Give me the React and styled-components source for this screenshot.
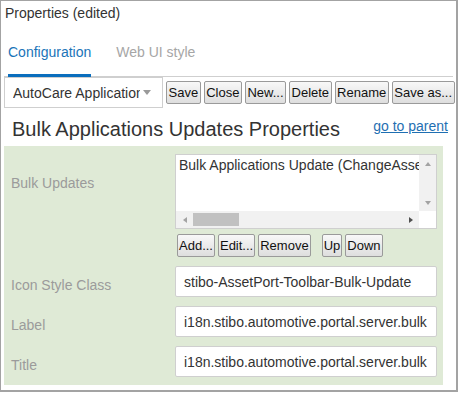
import React from "react";
import styled, { createGlobalStyle } from "styled-components";

const GlobalStyle = createGlobalStyle`
  body {
    margin: 0;
    background: #fff;
    font-family: "Liberation Sans", Arial, sans-serif;
  }
`;

function Arrow({ dir, dark }) {
  return <Tri $dir={dir} $dark={dark} />;
}

function App() {
  return (
    <>
      <GlobalStyle />
      <Frame>
        <WindowTitle>Properties (edited)</WindowTitle>
        <TabBar>
          <Tab $active>Configuration</Tab>
          <Tab>Web UI style</Tab>
        </TabBar>
        <Toolbar>
          <Select>
            <SelectText>AutoCare Applications Update</SelectText>
            <Caret />
          </Select>
          <ToolButton>Save</ToolButton>
          <ToolButton>Close</ToolButton>
          <ToolButton>New...</ToolButton>
          <ToolButton>Delete</ToolButton>
          <ToolButton>Rename</ToolButton>
          <ToolButton>Save as...</ToolButton>
        </Toolbar>
        <HeaderRow>
          <Heading>Bulk Applications Updates Properties</Heading>
          <ParentLink href="#">go to parent</ParentLink>
        </HeaderRow>
        <Panel>
          <Row>
            <Label $top={21}>Bulk Updates</Label>
            <div>
              <ListBox>
                <ListContent>Bulk Applications Update (ChangeAssetApplications)</ListContent>
                <VScroll>
                  <ArrowBox><Arrow dir="up" /></ArrowBox>
                  <ArrowBox><Arrow dir="down" /></ArrowBox>
                </VScroll>
                <HScroll>
                  <ArrowBox><Arrow dir="left" /></ArrowBox>
                  <Thumb />
                  <ArrowBox><Arrow dir="right" dark /></ArrowBox>
                </HScroll>
                <div />
              </ListBox>
              <ListButtons>
                <Button>Add...</Button>
                <Button>Edit...</Button>
                <Button>Remove</Button>
                <Button $gapBefore>Up</Button>
                <Button>Down</Button>
              </ListButtons>
            </div>
          </Row>
          <Row>
            <Label $top={11}>Icon Style Class</Label>
            <Field readOnly value="stibo-AssetPort-Toolbar-Bulk-Update" />
          </Row>
          <Row>
            <Label $top={11}>Label</Label>
            <Field readOnly value="i18n.stibo.automotive.portal.server.bulk" />
          </Row>
          <Row>
            <Label $top={11}>Title</Label>
            <Field readOnly value="i18n.stibo.automotive.portal.server.bulk" />
          </Row>
        </Panel>
      </Frame>
    </>
  );
}

export default App;

const Frame = styled.div`
  box-sizing: border-box;
  width: 458px;
  height: 392px;
  border: 1px solid #a3a3a3;
  border-right-width: 2px;
  border-bottom-width: 2px;
  padding: 0 3px;
  color: #333;
  font-size: 14px;
  line-height: 16px;
  overflow: hidden;
`;

const WindowTitle = styled.div`
  padding: 4px 0 0 1px;
`;

const TabBar = styled.div`
  display: flex;
  gap: 25px;
  padding: 23px 0 0 4px;
  border-bottom: 1px solid #cfcfcf;
`;

const Tab = styled.div`
  padding-bottom: 14px;
  margin-bottom: -1px;
  color: ${(p) => (p.$active ? "#1a74b8" : "#a6a6a6")};
  border-bottom: 3px solid ${(p) => (p.$active ? "#0a6ebd" : "transparent")};
`;

const Toolbar = styled.div`
  display: flex;
  align-items: center;
  gap: 3px;
`;

const Select = styled.div`
  box-sizing: border-box;
  flex: none;
  width: 159px;
  height: 31px;
  border: 1px solid #cfcfcf;
  display: flex;
  align-items: center;
  padding-left: 8px;
`;

const SelectText = styled.span`
  width: 127px;
  overflow: hidden;
  white-space: nowrap;
`;

const Caret = styled.span`
  margin-left: 3px;
  border-left: 4px solid transparent;
  border-right: 4px solid transparent;
  border-top: 5px solid #9a9a9a;
`;

const Button = styled.button`
  box-sizing: border-box;
  flex: none;
  height: 23px;
  padding: 0 1px;
  margin: 0 0 0 ${(p) => (p.$gapBefore ? "8px" : "0")};
  border: 1px solid #9a9a9a;
  border-radius: 2px;
  background: linear-gradient(#f8f8f8, #dedede);
  font: 13px "Liberation Sans", Arial, sans-serif;
  color: #111;
  white-space: nowrap;
`;

const ToolButton = styled(Button)`
  padding: 0 1.5px;
`;

const HeaderRow = styled.div`
  display: flex;
  justify-content: space-between;
  align-items: flex-start;
  padding: 9px 5px 0 8px;
  margin-bottom: 5px;
`;

const Heading = styled.div`
  font-size: 20px;
  line-height: 24px;
`;

const ParentLink = styled.a`
  margin-top: 1px;
  color: #1f6fb2;
  text-decoration: underline;
`;

const Panel = styled.div`
  box-sizing: border-box;
  width: 439px;
  background: #dfead6;
  padding: 8px 6px 8px 7px;
  display: flex;
  flex-direction: column;
  gap: 9px;
`;

const Row = styled.div`
  display: grid;
  grid-template-columns: 164px 262px;
  align-items: start;
`;

const Label = styled.div`
  color: #9b9b9b;
  padding-top: ${(p) => p.$top}px;
`;

const ListBox = styled.div`
  box-sizing: border-box;
  height: 75px;
  border: 1px solid #cfcfcf;
  background: #fff;
  display: grid;
  grid-template-columns: minmax(0, 1fr) 17px;
  grid-template-rows: 56px 17px;
`;

const ListContent = styled.div`
  padding: 2px 3px;
  white-space: nowrap;
  overflow: hidden;
`;

const VScroll = styled.div`
  background: #f1f1f1;
  display: flex;
  flex-direction: column;
  justify-content: space-between;
`;

const HScroll = styled.div`
  background: #f1f1f1;
  display: flex;
  align-items: center;
`;

const ArrowBox = styled.div`
  width: 17px;
  height: 17px;
  flex: none;
  display: flex;
  align-items: center;
  justify-content: center;
`;

const Thumb = styled.div`
  width: 46px;
  height: 13px;
  margin-right: auto;
  background: #c1c1c1;
`;

const Tri = styled.span`
  width: 0;
  height: 0;
  ${(p) => {
    const c = p.$dark ? "#505050" : "#a3a3a3";
    if (p.$dir === "up")
      return `border-left: 3.5px solid transparent; border-right: 3.5px solid transparent; border-bottom: 4px solid ${c};`;
    if (p.$dir === "down")
      return `border-left: 3.5px solid transparent; border-right: 3.5px solid transparent; border-top: 4px solid ${c};`;
    if (p.$dir === "left")
      return `border-top: 3.5px solid transparent; border-bottom: 3.5px solid transparent; border-right: 4px solid ${c};`;
    return `border-top: 3.5px solid transparent; border-bottom: 3.5px solid transparent; border-left: 4px solid ${c};`;
  }}
`;

const ListButtons = styled.div`
  display: flex;
  gap: 3px;
  margin-top: 5px;
  padding-left: 2px;
`;

const Field = styled.input`
  box-sizing: border-box;
  width: 262px;
  height: 31px;
  margin: 0;
  padding: 0 8px;
  border: 1px solid #cfcfcf;
  border-radius: 2px;
  background: #fff;
  font: 14px "Liberation Sans", Arial, sans-serif;
  color: #333;
  outline: none;
`;
